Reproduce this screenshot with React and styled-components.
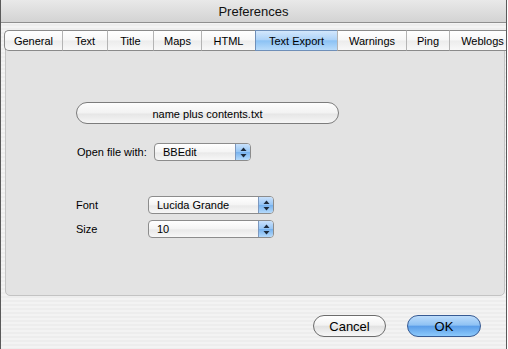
import React from "react"
import styled, { createGlobalStyle } from "styled-components"

const GlobalStyle = createGlobalStyle`
  html, body {
    margin: 0;
    padding: 0;
    background: #fff;
  }
  body {
    font-family: "Liberation Sans", Arial, sans-serif;
    font-size: 11px;
    color: #000;
  }
`

const tabs = [
  { label: "General", width: 58 },
  { label: "Text", width: 45 },
  { label: "Title", width: 46 },
  { label: "Maps", width: 48 },
  { label: "HTML", width: 54 },
  { label: "Text Export", width: 82 },
  { label: "Warnings", width: 69 },
  { label: "Ping", width: 43 },
  { label: "Weblogs", width: 66 },
]

const App = () => (
  <>
    <GlobalStyle />
    <Window>
      <TitleBar>Preferences</TitleBar>
      <Body>
        <TabBar>
          {tabs.map((t, i) => (
            <Tab
              key={t.label}
              $width={t.width}
              $active={t.label === "Text Export"}
              $first={i === 0}
            >
              {t.label}
            </Tab>
          ))}
        </TabBar>
        <Panel>
          <WideButton>name plus contents.txt</WideButton>
          <OpenRow>
            <Label $width={77}>Open file with:</Label>
            <Popup $width={97}>BBEdit<Arrows /></Popup>
          </OpenRow>
          <FontGroup>
            <Row>
              <Label $width={72}>Font</Label>
              <Popup $width={126}>Lucida Grande<Arrows /></Popup>
            </Row>
            <Row>
              <Label $width={72}>Size</Label>
              <Popup $width={126}>10<Arrows /></Popup>
            </Row>
          </FontGroup>
        </Panel>
        <ButtonRow>
          <PushButton>Cancel</PushButton>
          <PushButton $default>OK</PushButton>
        </ButtonRow>
      </Body>
    </Window>
  </>
)

const Arrows = () => (
  <ArrowBox>
    <svg width="7" height="11" viewBox="0 0 7 11">
      <path d="M3.5 0.5 L6.5 4 L0.5 4 Z" fill="#1d2a3a" />
      <path d="M3.5 10.5 L6.5 7 L0.5 7 Z" fill="#1d2a3a" />
    </svg>
  </ArrowBox>
)

const Window = styled.div`
  width: 507px;
  height: 349px;
  box-sizing: border-box;
  overflow: hidden;
  border-left: 1px solid #5a5a5a;
  border-right: 1px solid #5a5a5a;
  display: flex;
  flex-direction: column;
  background: repeating-linear-gradient(#ededed 0 2px, #f3f3f3 2px 4px);
`

const TitleBar = styled.div`
  height: 23px;
  flex: none;
  box-sizing: border-box;
  border-bottom: 1px solid #8e8e8e;
  background: linear-gradient(#e9e9e9, #d3d3d3);
  display: flex;
  align-items: center;
  justify-content: center;
  padding-top: 1px;
  font-size: 13px;
  color: #111;
`

const Body = styled.div`
  padding: 7px 0 0 3px;
  display: flex;
  flex-direction: column;
`

const TabBar = styled.div`
  display: flex;
  position: relative;
  z-index: 1;
  margin-bottom: -10px;
  white-space: nowrap;
`

const Tab = styled.div`
  flex: none;
  width: ${p => p.$width}px;
  height: 21px;
  box-sizing: border-box;
  display: flex;
  align-items: center;
  justify-content: center;
  font-size: 11px;
  color: #000;
  border-top: 1px solid #8a8a8a;
  border-bottom: 1px solid #8a8a8a;
  border-left: 1px solid ${p => (p.$first ? "#8a8a8a" : "#b4b4b4")};
  border-radius: ${p => (p.$first ? "5px 0 0 5px" : "0")};
  background: ${p =>
    p.$active
      ? "linear-gradient(#d3e7fc 0%, #aed3f8 45%, #8cc2f4 52%, #b9dcfb 100%)"
      : "linear-gradient(#ffffff 0%, #f7f7f7 48%, #ececec 52%, #f8f8f8 100%)"};
  ${p => p.$active && "border-color: #6f8fb8;"}
`

const Panel = styled.div`
  margin-left: 1px;
  width: 500px;
  height: 255px;
  box-sizing: border-box;
  background: #e3e3e3;
  border: 1px solid #c3c3c3;
  border-radius: 5px;
  padding: 60px 0 0 70px;
  display: flex;
  flex-direction: column;
  align-items: flex-start;
`

const WideButton = styled.div`
  width: 263px;
  height: 22px;
  box-sizing: border-box;
  border: 1px solid #7c7c7c;
  border-radius: 11px;
  background: linear-gradient(#fdfdfd 0%, #f2f2f2 50%, #e6e6e6 55%, #f6f6f6 100%);
  display: flex;
  align-items: center;
  justify-content: center;
  font-size: 11px;
  padding-top: 1px;
`

const Row = styled.div`
  display: flex;
  align-items: center;
  height: 18px;
`

const OpenRow = styled(Row)`
  margin-top: 19px;
  padding-left: 1px;
`

const FontGroup = styled.div`
  margin-top: 35px;
  display: flex;
  flex-direction: column;
  gap: 6px;
`

const Label = styled.div`
  width: ${p => p.$width}px;
  font-size: 11px;
`

const Popup = styled.div`
  position: relative;
  width: ${p => p.$width}px;
  height: 18px;
  box-sizing: border-box;
  border: 1px solid #8c8c8c;
  border-radius: 4px;
  background: linear-gradient(#ffffff 0%, #f4f4f4 50%, #e9e9e9 55%, #f7f7f7 100%);
  display: flex;
  align-items: center;
  padding-left: 8px;
  font-size: 11px;
  overflow: hidden;
`

const ArrowBox = styled.div`
  position: absolute;
  right: 0;
  top: 0;
  bottom: 0;
  width: 14px;
  border-left: 1px solid #7c98bf;
  background: linear-gradient(#c9e1fb 0%, #97c6f5 48%, #77b2ee 52%, #b5dafb 100%);
  display: flex;
  align-items: center;
  justify-content: center;
`

const ButtonRow = styled.div`
  display: flex;
  justify-content: flex-end;
  gap: 21px;
  margin-top: 19px;
  padding-right: 25px;
`

const PushButton = styled.div`
  width: ${p => (p.$default ? 74 : 73)}px;
  height: 22px;
  box-sizing: border-box;
  border-radius: 11px;
  border: 1px solid ${p => (p.$default ? "#365a93" : "#6c6c6c")};
  background: ${p =>
    p.$default
      ? "linear-gradient(#bcdcfb 0%, #8fc2f4 45%, #5b9ee9 52%, #8cc9fb 100%)"
      : "linear-gradient(#ffffff 0%, #f3f3f3 45%, #e2e2e2 52%, #f7f7f7 100%)"};
  display: flex;
  align-items: center;
  justify-content: center;
  font-size: 13px;
  color: #000;
`

export default App
